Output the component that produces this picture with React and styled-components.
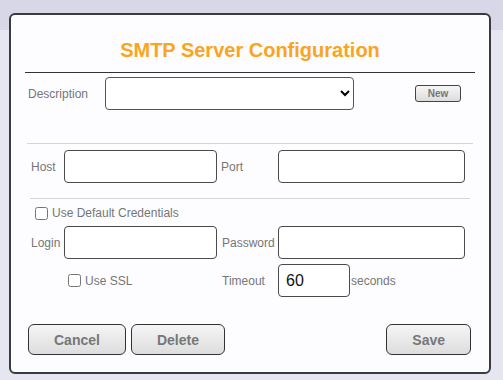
import React from 'react'
import styled, { createGlobalStyle } from 'styled-components'

const Global = createGlobalStyle`
  html, body {
    margin: 0;
    padding: 0;
    background: #e4e4ee;
    font-family: "Liberation Sans", Arial, sans-serif;
  }
`

const Page = styled.div`
  width: 503px;
  height: 380px;
  padding: 13px 0 0 9px;
  box-sizing: border-box;
  background: linear-gradient(#d7d7e7 0, #d7d7e7 30px, #e6e6f0 30px);
  overflow: hidden;
`

const Modal = styled.div`
  width: 482px;
  height: 361px;
  box-sizing: border-box;
  border: 2px solid #3b3b3d;
  border-radius: 6px;
  background: #fdfdff;
  padding: 24px 14px 0 14px;
  display: flex;
  flex-direction: column;
`

const Title = styled.h1`
  margin: 0;
  height: 22px;
  font-size: 20px;
  line-height: 22px;
  font-weight: bold;
  text-align: center;
  color: #fba41d;
`

const Rule = styled.hr`
  margin: ${p => p.$top || 0}px ${p => p.$inset || 0}px 0;
  border: none;
  height: 1px;
  background: ${p => (p.$dark ? '#333' : '#d6d6d6')};
`

const Label = styled.span`
  font-size: 12px;
  color: #767676;
  white-space: nowrap;
`

const DescRow = styled.div`
  display: flex;
  align-items: center;
  margin-top: 4px;
  padding-left: 3px;
  height: 33px;
  ${Label} {
    width: 77px;
  }
`

const Select = styled.select`
  width: 249px;
  height: 33px;
  border: 1px solid #555;
  border-radius: 4px;
  background: #fff;
  font-family: inherit;
  font-size: 13px;
  box-sizing: border-box;
`

const SmallButton = styled.button`
  margin-left: 61px;
  width: 46px;
  height: 17px;
  padding: 0;
  border: 1px solid #444;
  border-radius: 3px;
  background: linear-gradient(#f6f6f6, #dcdcdc);
  font-family: inherit;
  font-size: 10px;
  font-weight: bold;
  color: #777;
`

const FieldGrid = styled.div`
  display: grid;
  grid-template-columns: 33px 153px 61px 187px;
  align-items: center;
  padding-left: 6px;
  margin-top: ${p => p.$top || 0}px;
  row-gap: ${p => p.$gap || 0}px;
`

const Input = styled.input`
  box-sizing: border-box;
  width: ${p => p.$w || '100%'};
  height: 33px;
  border: 1px solid #4a4a4a;
  border-radius: 4px;
  background: #fff;
  font-family: inherit;
  font-size: 16px;
  color: #111;
  padding: 0 7px;
`

const SideLabel = styled(Label)`
  padding-left: ${p => p.$pad ?? 4}px;
`

const Check = styled.label`
  display: flex;
  align-items: center;
  gap: 4px;
  font-size: 12px;
  color: #767676;
  margin-left: ${p => p.$left || 0}px;
  grid-column: ${p => p.$span || 'auto'};
  input {
    margin: 0;
    width: 13px;
    height: 13px;
  }
`

const Inline = styled.div`
  display: flex;
  align-items: center;
  ${Label} {
    margin-left: 1px;
  }
`

const Footer = styled.div`
  display: flex;
  gap: 5px;
  margin-top: 27px;
  padding: 0 4px 0 3px;
`

const Button = styled.button`
  height: 31px;
  padding: 0 25px;
  border: 1px solid #333;
  border-radius: 6px;
  background: linear-gradient(#f5f5f5, #dddddd);
  font-family: inherit;
  font-size: 14px;
  font-weight: bold;
  color: #777;
  margin-left: ${p => (p.$push ? 'auto' : '0')};
`

export default function App() {
  return (
    <>
      <Global />
      <Page>
        <Modal>
          <Title>SMTP Server Configuration</Title>
          <Rule $dark $top={11} />
          <DescRow>
            <Label>Description</Label>
            <Select defaultValue="">
              <option value=""></option>
            </Select>
            <SmallButton>New</SmallButton>
          </DescRow>
          <Rule $top={33} $inset={2} />
          <FieldGrid $top={6}>
            <Label>Host</Label>
            <Input />
            <SideLabel>Port</SideLabel>
            <Input />
          </FieldGrid>
          <Rule $top={15} $inset={5} />
          <FieldGrid $top={7} $gap={6}>
            <Check $left={4} $span="1 / -1">
              <input type="checkbox" />
              Use Default Credentials
            </Check>
            <Label>Login</Label>
            <Input />
            <SideLabel $pad={5}>Password</SideLabel>
            <Input />
          </FieldGrid>
          <FieldGrid $top={5}>
            <span />
            <Check $left={4}>
              <input type="checkbox" />
              Use SSL
            </Check>
            <SideLabel $pad={5}>Timeout</SideLabel>
            <Inline>
              <Input $w="72px" defaultValue="60" />
              <Label>seconds</Label>
            </Inline>
          </FieldGrid>
          <Footer>
            <Button>Cancel</Button>
            <Button>Delete</Button>
            <Button $push>Save</Button>
          </Footer>
        </Modal>
      </Page>
    </>
  )
}
